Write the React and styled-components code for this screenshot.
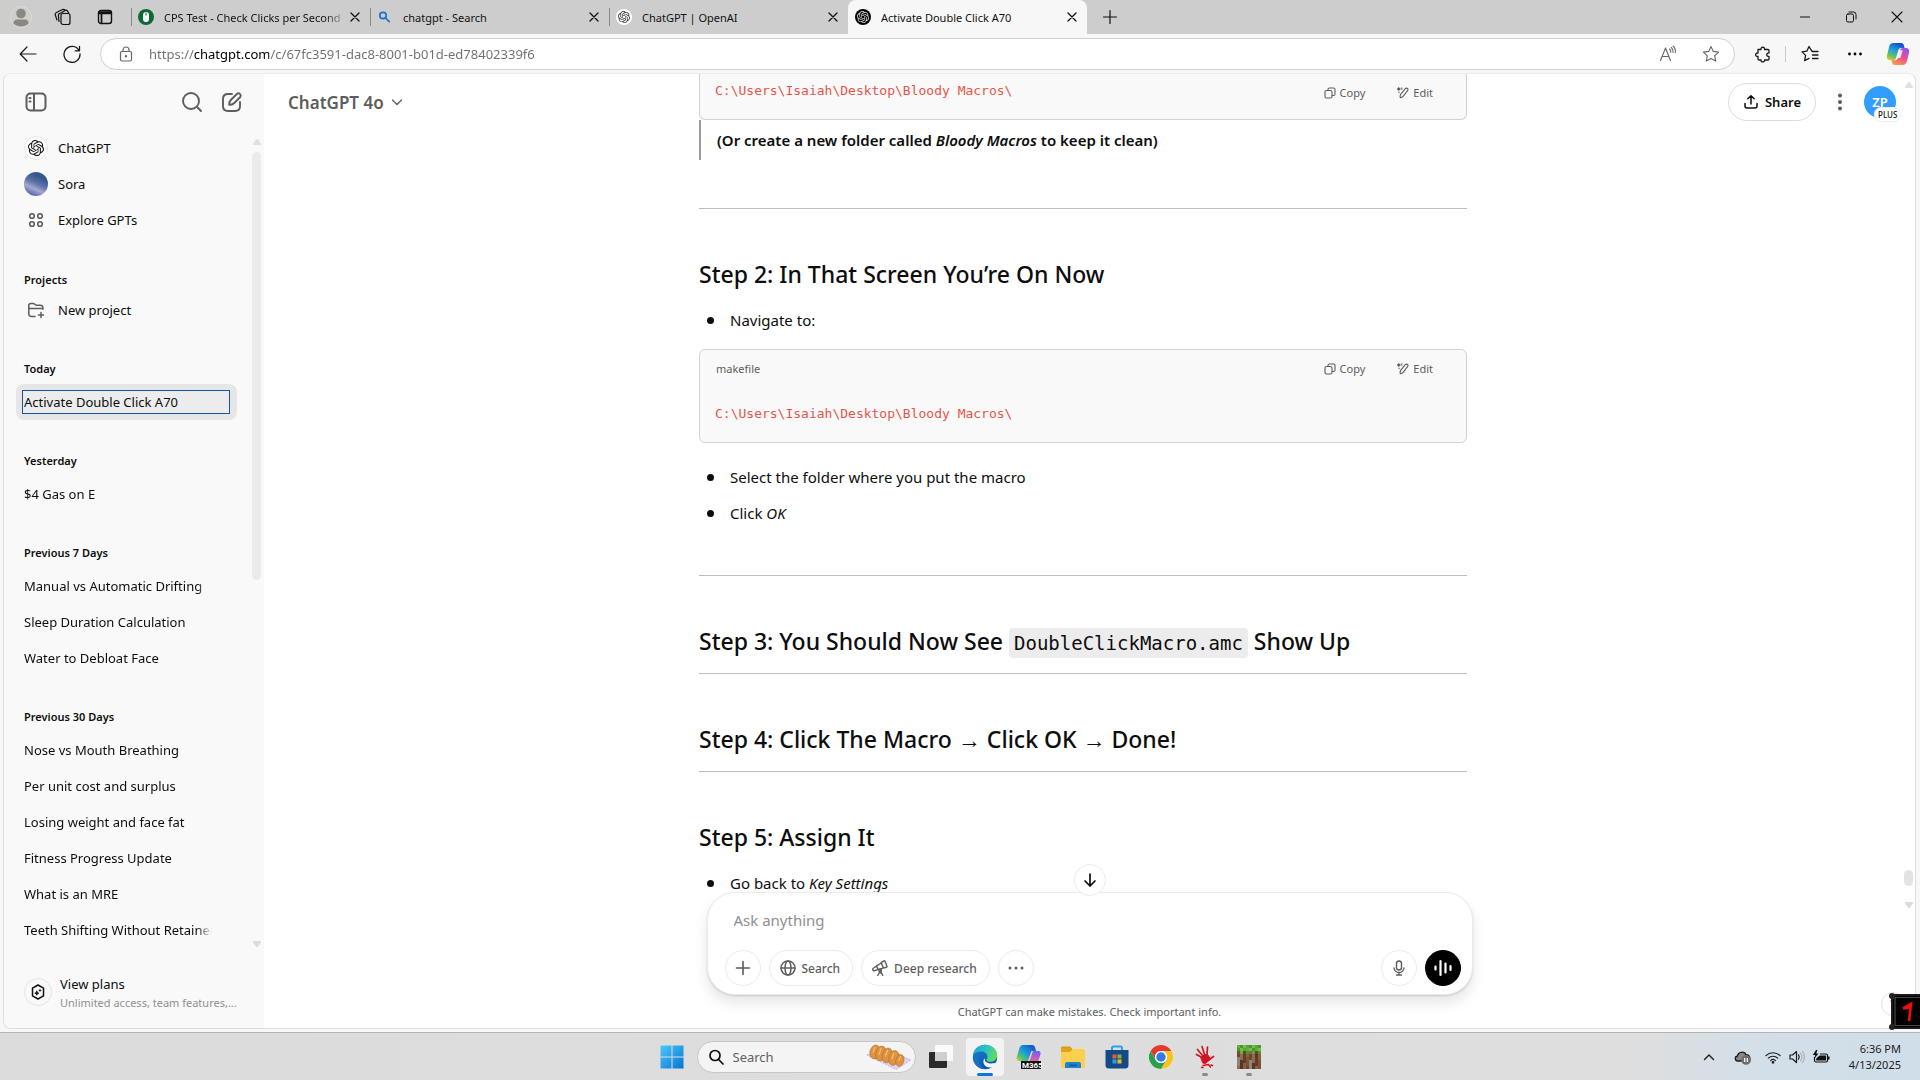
import React from "react";
import styled, { createGlobalStyle, css } from "styled-components";
import { SiOpenai } from "react-icons/si";

const sans = '"Noto Sans", "Open Sans", sans-serif';
const mono = '"DejaVu Sans Mono", "Liberation Mono", monospace';

const Global = createGlobalStyle`
  *, *::before, *::after { box-sizing: border-box; }
  html, body { margin: 0; height: 100%; overflow: hidden; }
  body { font-family: ${sans}; font-size: 13px; color: #0d0d0d; background: #f7f7f7; }
  button, input, textarea { font: inherit; color: inherit; margin: 0; padding: 0; border: 0; background: none; outline: 0; }
  button { display: inline-flex; align-items: center; justify-content: center; cursor: pointer; white-space: nowrap; }
  a { color: inherit; text-decoration: none; }
  ul, p, h1, h2, h3, pre, blockquote { margin: 0; padding: 0; font: inherit; }
  svg { display: block; flex: none; }
`;

const Screen = styled.div`
  height: 100vh;
  display: flex;
  flex-direction: column;
`;

/* ---------- icons ---------- */

const Line = styled.svg.attrs({ fill: "none", stroke: "currentColor", strokeLinecap: "round", strokeLinejoin: "round" })`
  width: ${(p) => p.$s || 16}px;
  height: ${(p) => p.$s || 16}px;
  stroke-width: ${(p) => p.$w || 1.2};
`;

const CloseIcon = () => (
  <Line viewBox="0 0 16 16" $w={1.3}><path d="M4 4l8 8M12 4l-8 8" /></Line>
);
const CopyIcon = () => (
  <Line viewBox="0 0 12 12" $s={12} $w={1.1}>
    <rect x="1" y="3.5" width="7" height="7.5" rx="1.5" />
    <path d="M4 3.2V2.4C4 1.6 4.6 1 5.4 1h4.2c.8 0 1.4.6 1.4 1.4v4.7c0 .8-.6 1.4-1.4 1.4H8.2" />
  </Line>
);
const EditIcon = () => (
  <Line viewBox="0 0 12 12" $s={12} $w={1.1}>
    <path d="M4 6.800L8.300 1.700c.6-.7 1.600-.8 2.200-.2s.6 1.500 0 2.200L6.500 8.800c-.8 1-1.900 1.800-3.200 2-.3-1.300-.2-2.900.7-4z" />
    <path d="M1.800.6l.4 1 1 .4-1 .4-.4 1-.4-1-1-.4 1-.4zM4.800.8v1.400M2 5v.6" fill="currentColor" />
  </Line>
);
const Triangle = ({ down }) => (
  <svg width="10" height="8" viewBox="0 0 10 8" fill={down ? "#dcdcdc" : "#e0e0e0"}>
    <path d={down ? "M1.5 1h7q1 .2.5 1.2L6 6.500q-1 1-2 0L1 2.200Q.5 1.200 1.500 1z" : "M1.5 7h7q1-.2.5-1.2L6 1.500q-1-1-2 0L1 5.800q-.5 1 .5 1.200z"} />
  </svg>
);

/* ---------- browser frame ---------- */

const TabStrip = styled.header`
  display: flex;
  height: 34px;
  background: #cdcdcd;
  color: #111;
`;
const FrameButtons = styled.div`
  display: flex;
  align-items: center;
  width: 131px;
`;
const FrameButton = styled.button`
  width: 42px;
  height: 34px;
`;
const Tab = styled.div`
  display: flex;
  align-items: center;
  width: 239px;
  height: 34px;
  padding: 0 7px;
  font-size: 11px;
  background: ${(p) => (p.$active ? "#f7f7f7" : "transparent")};
  border-radius: ${(p) => (p.$active ? "8px 8px 0 0" : "0")};
  ${(p) => p.$divided && css`
    background: linear-gradient(#8a8a8a, #8a8a8a) 0 8px / 1px 18px no-repeat;
  `}
`;
const TabLabel = styled.button`
  flex: 1;
  min-width: 0;
  gap: 10px;
  height: 34px;
  justify-content: flex-start;
  span {
    flex: 1;
    text-align: left;
    overflow: hidden;
    ${(p) => p.$fade && css`
      mask-image: linear-gradient(90deg, #000 88%, transparent);
    `}
  }
`;
const Favicon = styled.i`
  display: grid;
  place-items: center;
  width: 16px;
  height: 16px;
  border-radius: 50%;
  background: ${(p) => p.$bg || "transparent"};
  color: ${(p) => p.$fg || "#222"};
`;
const NewTab = styled.button`
  width: 46px;
`;
const WindowButtons = styled.div`
  display: flex;
  margin-left: auto;
  button { width: 46px; }
`;
const Toolbar = styled.div`
  display: flex;
  align-items: center;
  height: 39px;
  padding: 0 0 0 6px;
  background: #f7f7f7;
  color: #1a1a1a;
`;
const ToolButton = styled.button`
  width: ${(p) => p.$w || 44}px;
  height: 32px;
`;
const Address = styled.form`
  flex: 1;
  display: flex;
  align-items: center;
  height: 32px;
  margin: 0 6px;
  padding-left: 17px;
  background: #fff;
  border: 1px solid #d0d0d0;
  border-radius: 16px;
  color: #666;
`;
const Url = styled.input`
  flex: 1;
  height: 28px;
  margin-left: 15px;
  color: #6e6e6e;
  background: linear-gradient(90deg, #6e6e6e 45px, #000 45px, #000 120px, #6e6e6e 120px);
  background-clip: text;
  -webkit-text-fill-color: transparent;
`;
const Divider = styled.i`
  width: 1px;
  height: 16px;
  background: #c9c9c9;
`;

const tabs = [
  { title: "CPS Test - Check Clicks per Second", icon: "mouse", fade: true },
  { title: "chatgpt - Search", icon: "search" },
  { title: "ChatGPT | OpenAI", icon: "light" },
  { title: "Activate Double Click A70", icon: "dark" },
];

function TabIcon({ kind }) {
  if (kind === "mouse")
    return (
      <Favicon $bg="#0a6b35">
        <svg width="16" height="16" viewBox="0 0 16 16"><rect x="5" y="3" width="6" height="10" rx="3" fill="#fff" /><path d="M8 3.5v3" stroke="#0a6b35" /></svg>
      </Favicon>
    );
  if (kind === "search")
    return (
      <Favicon $fg="#1a73c9">
        <Line viewBox="0 0 16 16" $w={1.7}><circle cx="6" cy="6.5" r="3.2" /><path d="M8.500 9l3.700 3.700" /></Line>
      </Favicon>
    );
  return (
    <Favicon $bg={kind === "dark" ? "#000" : "#fff"} $fg={kind === "dark" ? "#ddd" : "#333"}>
      <SiOpenai size={12} />
    </Favicon>
  );
}

function Browser() {
  return (
    <>
      <TabStrip>
        <FrameButtons>
          <FrameButton aria-label="Profile">
            <svg width="22" height="22" viewBox="0 0 22 22"><circle cx="11" cy="11" r="10.5" fill="#d0cec9" stroke="#dedbd5" /><circle cx="11" cy="7.500" r="4.800" fill="#8b8782" /><path d="M3.500 17.500c0-4.500 3-4 7.500-4s7.500-.5 7.500 4c-4 4-11 4-15 0z" fill="#8b8782" /></svg>
          </FrameButton>
          <FrameButton aria-label="Workspaces">
            <Line viewBox="0 0 18 18" $s={18} $w={1.2}>
              <rect x="7" y="5.500" width="9" height="11" rx="2" />
              <path d="M5 13.500l-.6-6c-.1-1.200.6-2 1.700-2.200M7 5l4-2.500c1-.6 2-.3 2.600.7l1 1.800M3 12L1.300 7c-.4-1.200.1-2 1.200-2.500L8.500 1.500c1-.4 1.800-.2 2.300.6" />
            </Line>
          </FrameButton>
          <FrameButton aria-label="Tab actions">
            <Line viewBox="0 0 16 16" $w={1.4}><rect x="1.500" y="1.500" width="13" height="13" rx="2.500" /><path d="M2 3h12M2 4.500h12M4.500 5v9" strokeWidth="1.700" /></Line>
          </FrameButton>
        </FrameButtons>
        {tabs.map((t, i) => (
          <Tab key={t.title} $active={i === 3} $divided={i < 3}>
            <TabLabel $fade={t.fade}><TabIcon kind={t.icon} /><span>{t.title}</span></TabLabel>
            <button aria-label={`Close ${t.title}`}><CloseIcon /></button>
          </Tab>
        ))}
        <NewTab aria-label="New tab"><Line viewBox="0 0 16 16"><path d="M8 1.500v13M1.500 8h13" /></Line></NewTab>
        <WindowButtons>
          <button aria-label="Minimize"><Line viewBox="0 0 12 12" $s={12}><path d="M1.500 6h9" /></Line></button>
          <button aria-label="Restore"><Line viewBox="0 0 12 12" $s={12} $w={1}><rect x="1.500" y="3" width="7" height="8" rx="1.500" /><path d="M4 1h4.500Q11 1 11 3.500V8" /></Line></button>
          <button aria-label="Close"><Line viewBox="0 0 12 12" $s={12} $w={1.1}><path d="M1 1l10 10M11 1L1 11" /></Line></button>
        </WindowButtons>
      </TabStrip>
      <Toolbar>
        <ToolButton aria-label="Back"><Line viewBox="0 0 18 18" $s={18}><path d="M17 9H1.500M8 2L1.200 9 8 16" /></Line></ToolButton>
        <ToolButton aria-label="Refresh"><Line viewBox="0 0 18 18" $s={18} $w={1.3}><path d="M16 5.500A8 8 0 1 0 17 9M16.500 1.500v4.300h-4.300" /></Line></ToolButton>
        <Address onSubmit={(e) => e.preventDefault()}>
          <Line viewBox="0 0 16 16"><rect x="2.500" y="5.500" width="11" height="9.500" rx="1.500" /><path d="M5 5.500V4a3 3 0 0 1 6 0v1.500" /><circle cx="8" cy="10.200" r=".6" fill="currentColor" /></Line>
          <Url aria-label="Address" defaultValue="https://chatgpt.com/c/67fc3591-dac8-8001-b01d-ed78402339f6" />
          <ToolButton type="button" $w={40} aria-label="Read aloud">
            <Line viewBox="0 0 18 18" $s={18} $w={1.1}><path d="M1.500 15.500L6.500 3l5 12.500M3.300 11.500h6.500M10.500 4c1 .8 1.400 2 1.300 3.300M12.300 2.500c1.400 1.300 2 3 1.800 5M14 1c2 1.800 2.700 4 2.300 6.500" /></Line>
          </ToolButton>
          <ToolButton type="button" $w={46} aria-label="Favorite">
            <Line viewBox="0 0 18 18" $s={18} $w={1.1}><path d="M9 1.500l2.300 4.900 5.300.7-3.900 3.700 1 5.300L9 13.500l-4.700 2.600 1-5.300L1.400 7.100l5.300-.7z" /></Line>
          </ToolButton>
        </Address>
        <ToolButton aria-label="Extensions">
          <Line viewBox="0 0 18 18" $s={18} $w={1.3}><path d="M4 4.500h3c-.6-3 4-3 3.600 0H14c.6 0 1 .4 1 1V8c-3-.4-3 3.800 0 3.500V14c0 .6-.4 1-1 1h-3.400c.3 2.500-4 2.500-3.600 0H5c-.6 0-1-.4-1-1v-2.500C.8 11.800.8 7.700 4 8z" /></Line>
        </ToolButton>
        <Divider />
        <ToolButton $w={48} aria-label="Favorites list">
          <Line viewBox="0 0 18 18" $s={18} $w={1.3}><path d="M11 6.300L8 1.500 5.800 6.200l-4.800.7 3.600 3.500-1 5.300L8 13.400M11.500 6.500H17M11.500 10H17M11.500 13.500H17" /></Line>
        </ToolButton>
        <ToolButton $w={42} aria-label="Settings and more">
          <svg width="16" height="16" viewBox="0 0 16 16"><circle cx="2.500" cy="8" r="1.400" /><circle cx="8" cy="8" r="1.400" /><circle cx="13.500" cy="8" r="1.400" /></svg>
        </ToolButton>
        <ToolButton aria-label="Copilot"><CopilotIcon id="bar" size={24} /></ToolButton>
      </Toolbar>
    </>
  );
}

function CopilotIcon({ id, size }) {
  return (
    <svg width={size} height={size} viewBox="0 0 24 24">
      <defs>
        <linearGradient id={`${id}a`} x1="0.6" y1="0" x2="0.2" y2="1"><stop offset="0" stopColor="#1550c8" /><stop offset=".4" stopColor="#1e9be0" /><stop offset=".75" stopColor="#5cc46a" /><stop offset="1" stopColor="#f2c51b" /></linearGradient>
        <linearGradient id={`${id}b`} x1="0.7" y1="0" x2="0.3" y2="1"><stop offset="0" stopColor="#9455e8" /><stop offset=".5" stopColor="#e8509a" /><stop offset="1" stopColor="#fb9a4b" /></linearGradient>
      </defs>
      <path d="M7.500 1h7.500c2 0 2.600 1.200 3.100 3l.5 2h-3.300c-1.700 0-2.600.8-3.100 2.600l-2 7c-.5 1.900-1.400 2.700-3 2.700H4.500C1.500 18.300.3 16.500 1 13.500l2-8.300C3.700 2.400 5 1 7.500 1z" fill={`url(#${id}a)`} />
      <path d="M16.500 23H9c-2 0-2.600-1.200-3-2.800l-.4-1.900h3.100c1.700 0 2.600-.8 3.100-2.600l2-7c.5-1.900 1.400-2.700 3-2.700h2.700c3 0 4.200 2 3.500 4.800l-2 8.300c-.7 2.700-2 3.900-4.500 3.900z" fill={`url(#${id}b)`} />
      <path d="M13.500 8.200h3.200l-2.400 7.900h-3.600z" fill="#fff" opacity=".85" />
    </svg>
  );
}

/* ---------- page ---------- */

const Page = styled.div`
  position: relative;
  flex: 1;
  min-height: 0;
  display: flex;
  margin: 0 4px 3px 3px;
  border: 1px solid #dedede;
  border-top-color: #ececec;
  border-radius: 8px;
  background: #fff;
  overflow: hidden;
`;
const Sidebar = styled.aside`
  flex: none;
  display: flex;
  flex-direction: column;
  width: 260px;
  background: #f9f9f9;
`;
const SideTop = styled.div`
  display: flex;
  align-items: center;
  height: 56px;
  padding: 0 12px;
  color: #5d5d5d;
  button { width: 40px; height: 40px; }
  button:first-child { margin-right: auto; }
`;
const SideBody = styled.div`
  flex: 1;
  min-height: 0;
  display: flex;
`;
const SideNav = styled.nav`
  flex: 1;
  min-width: 0;
  overflow: hidden;
  padding: 0 15px 0 12px;
`;
const NavLink = styled.a`
  display: flex;
  align-items: center;
  gap: 10px;
  height: 36px;
  padding: 0 8px;
  border-radius: 8px;
  white-space: nowrap;
  overflow: hidden;
`;
const NavIcon = styled.span`
  display: grid;
  place-items: center;
  width: 24px;
  height: 24px;
  border-radius: 50%;
  color: ${(p) => p.$fg || "#5d5d5d"};
  border: ${(p) => (p.$ring ? "1px solid #e5e5e5" : "0")};
  background: ${(p) => p.$bg || "transparent"};
`;
const Group = styled.h3`
  padding: ${(p) => (p.$tight ? "33px 8px 3px" : "32px 8px 6px")};
  font-size: 11px;
  line-height: 18px;
  font-weight: 600;
`;
const ChatText = styled.span`
  width: 188px;
  overflow: hidden;
  mask-image: linear-gradient(90deg, #000 92%, transparent);
`;
const RenameRow = styled.div`
  display: flex;
  align-items: center;
  height: 36px;
  padding: 0 7px 0 6px;
  border-radius: 8px;
  background: #e6e6e6;
`;
const RenameInput = styled.input`
  width: 100%;
  height: 24px;
  padding-left: 1px;
  border: 1px solid #0f57a3;
  background: #ececec;
`;
const Rail = styled.div`
  display: flex;
  flex-direction: column;
  align-items: center;
  width: ${(p) => p.$w}px;
  padding: ${(p) => p.$pad};
  gap: 6px;
`;
const Thumb = styled.i`
  width: 9px;
  height: ${(p) => p.$h}px;
  border-radius: 5px;
  background: ${(p) => p.$c || "#ebebeb"};
  margin-top: ${(p) => (p.$end ? "auto" : "0")};
  margin-bottom: ${(p) => (p.$end ? "9px" : "auto")};
`;
const Plans = styled.button`
  justify-content: flex-start;
  gap: 8px;
  height: 72px;
  padding: 0 20px;
  text-align: left;
`;
const PlanText = styled.span`
  display: flex;
  flex-direction: column;
  padding-top: 2px;
  line-height: 19px;
  small { font-size: 11px; line-height: 18px; color: #8f8f8f; }
`;
const PlanIcon = styled(NavIcon)`
  width: 28px;
  height: 28px;
`;

const history = [
  { title: "Yesterday", items: ["$4 Gas on E"] },
  { title: "Previous 7 Days", items: ["Manual vs Automatic Drifting", "Sleep Duration Calculation", "Water to Debloat Face"] },
  {
    title: "Previous 30 Days",
    items: ["Nose vs Mouth Breathing", "Per unit cost and surplus", "Losing weight and face fat", "Fitness Progress Update", "What is an MRE", "Teeth Shifting Without Retainers"],
  },
];

function Side() {
  return (
    <Sidebar>
      <SideTop>
        <button aria-label="Close sidebar"><Line viewBox="0 0 24 24" $s={24} $w={2}><rect x="2.500" y="3.500" width="19" height="17" rx="4" /><path d="M10 4v16M5.500 8h1M5.500 11.500h1" /></Line></button>
        <button aria-label="Search chats"><Line viewBox="0 0 24 24" $s={24} $w={1.9}><circle cx="11" cy="11" r="8" /><path d="M17 17l4 4" /></Line></button>
        <button aria-label="New chat"><Line viewBox="0 0 24 24" $s={24} $w={1.9}><path d="M12 4H8c-3 0-5 2-5 5v7c0 3 2 5 5 5h7c3 0 5-2 5-5v-4M9.200 14.800c0-2 .4-3.600 1.600-4.800l6.300-6.200a2.300 2.300 0 0 1 3.200 3.200L14 13.200c-1.200 1.200-2.800 1.600-4.800 1.600z" /></Line></button>
      </SideTop>
      <SideBody>
        <SideNav>
          <NavLink href="#chatgpt"><NavIcon $ring $bg="#fff" $fg="#111"><SiOpenai size={16} /></NavIcon>ChatGPT</NavLink>
          <NavLink href="#sora"><NavIcon $bg="linear-gradient(205deg, #34588c 25%, #5f74ab 48%, #a6a8d0 66%, #6f7cb8 80%, #3b4d97)" />Sora</NavLink>
          <NavLink href="#gpts">
            <NavIcon><Line viewBox="0 0 16 16" $w={1.6}><circle cx="4" cy="4" r="2.300" /><circle cx="12" cy="4" r="2.300" /><circle cx="4" cy="12" r="2.300" /><circle cx="12" cy="12" r="2.300" /></Line></NavIcon>
            Explore GPTs
          </NavLink>
          <Group $tight>Projects</Group>
          <NavLink href="#new-project">
            <NavIcon><Line viewBox="0 0 18 18" $s={18} $w={1.5}><path d="M8 15.500H4.500c-1.700 0-2.700-1-2.700-2.700V4.500c0-1.200.8-2 2-2h2.400c1.500 0 1.500 1.700 3 1.700h4c1.700 0 2.700 1 2.700 2.600v1.400M2 7.500h12.500M14 11.500v5M11.500 14h5" /></Line></NavIcon>
            New project
          </NavLink>
          <Group>Today</Group>
          <RenameRow><RenameInput aria-label="Chat name" defaultValue="Activate Double Click A70" /></RenameRow>
          {history.map((g) => (
            <React.Fragment key={g.title}>
              <Group>{g.title}</Group>
              {g.items.map((t) => <NavLink key={t} href="#chat"><ChatText>{t}</ChatText></NavLink>)}
            </React.Fragment>
          ))}
        </SideNav>
        <Rail $w={12} $pad="8px 3px 8px 0"><Triangle /><Thumb $h={428} /><Triangle down /></Rail>
      </SideBody>
      <Plans>
        <PlanIcon $ring $fg="#111">
          <Line viewBox="0 0 16 16" $w={1.5}><path d="M8 1l5.500 3.200v7.600L8 15l-5.500-3.200V4.200z" /><path d="M6.800 7.200l.6 1.400 1.400.6-1.400.6-.6 1.400-.6-1.400-1.400-.6 1.400-.6zM10 5.500v1.800M9.100 6.400h1.800" strokeWidth=".9" fill="currentColor" /></Line>
        </PlanIcon>
        <PlanText>View plans<small>Unlimited access, team features,...</small></PlanText>
      </Plans>
    </Sidebar>
  );
}

const Main = styled.main`
  flex: 1;
  min-width: 0;
  display: grid;
  grid-template-rows: minmax(0, 1fr) auto;
  grid-template-columns: minmax(0, 1fr);
`;
const TopBar = styled.div`
  grid-area: 1 / 1;
  align-self: start;
  z-index: 1;
  display: flex;
  align-items: center;
  justify-content: space-between;
  height: 56px;
  padding: 0 19px 0 24px;
`;
const Model = styled.button`
  gap: 6px;
  font-size: 17px;
  font-weight: 600;
  color: #5d5d5d;
`;
const TopActions = styled.div`
  display: flex;
  align-items: center;
  gap: 10px;
`;
const Share = styled.button`
  gap: 6px;
  width: 88px;
  height: 38px;
  border: 1px solid #dcdcdc;
  border-radius: 19px;
  background: #fff;
  font-weight: 600;
`;
const KebabButton = styled.button`
  width: 28px;
  height: 36px;
`;
const Avatar = styled.button`
  position: relative;
  width: 32px;
  height: 32px;
  border-radius: 50%;
  background: #339cff;
  color: #fff;
  font-weight: 600;
`;
const Badge = styled.span`
  position: absolute;
  left: 10px;
  bottom: -4px;
  padding: 0 3px;
  border: 1px solid #eee;
  border-radius: 7px;
  background: #fff;
  color: #111;
  font-size: 8px;
  line-height: 13px;
  font-weight: 500;
`;
const Scroller = styled.div`
  grid-area: 1 / 1;
  display: flex;
  overflow: hidden;
`;
const Column = styled.div`
  flex: 1;
  min-width: 0;
`;
const Article = styled.article`
  max-width: 768px;
  margin: 0 auto;
  font-size: 15px;
  line-height: 28px;
`;
const CodeCard = styled.section`
  display: grid;
  grid-template-columns: 1fr auto;
  margin: ${(p) => (p.$cut ? "0" : "15px 0 20px")};
  border: 1px solid #d3d3d3;
  border-top-width: ${(p) => (p.$cut ? 0 : 1)}px;
  border-radius: ${(p) => (p.$cut ? "0 0 6px 6px" : "6px")};
  background: #f9f9f9;
  font-size: 11px;
  line-height: 38px;
  color: #5d5d5d;
  pre {
    grid-column: 1;
    padding: ${(p) => (p.$cut ? "5px 15px 16px" : "14px 15px 16px")};
    font: 13px/24px ${mono};
    color: #e45649;
  }
`;
const Lang = styled.span`
  padding-left: 16px;
`;
const CodeActions = styled.div`
  grid-column: 2;
  display: flex;
  align-items: flex-start;
  gap: 32px;
  padding-right: 33px;
  button { gap: 4px; height: 38px; }
`;
const Quote = styled.blockquote`
  padding: 8px 16px;
  border-left: 2px solid #9b9b9b;
  line-height: 24px;
  font-weight: 600;
`;
const Rule = styled.hr`
  height: 1px;
  margin: 0 0 49px;
  border: 0;
  background: #bdbdbd;
  ${Quote} + &, ul + & { margin-top: 48px; }
`;
const Heading = styled.h3`
  margin-bottom: 16px;
  font-size: 23px;
  line-height: 32px;
  font-weight: 500;
  code {
    padding: 4px 5px;
    border-radius: 4px;
    background: #ececec;
    font: 500 19px/20px ${mono};
  }
`;
const List = styled.ul`
  display: flex;
  flex-direction: column;
  gap: 8px;
  padding-left: 8px;
  list-style: none;
  li::before {
    content: "";
    display: inline-block;
    width: 7px;
    height: 7px;
    margin-right: 16px;
    border-radius: 50%;
    background: #0d0d0d;
    vertical-align: 2px;
  }
`;

const Dock = styled.div`
  grid-area: 2 / 1;
  position: relative;
  display: flex;
  flex-direction: column;
  align-items: center;
  margin-top: -19px;
`;
const ToBottom = styled.button`
  position: absolute;
  top: -28px;
  width: 32px;
  height: 32px;
  border: 1px solid #ececec;
  border-radius: 50%;
  background: #fff;
`;
const Composer = styled.form`
  width: 100%;
  max-width: 766px;
  padding: 15px 11px 8px 17px;
  border: 1px solid #ececec;
  border-radius: 28px;
  background: #fff;
  box-shadow: 0 8px 14px rgba(0, 0, 0, 0.1), 0 1px 2px rgba(0, 0, 0, 0.14);
`;
const Prompt = styled.input`
  display: block;
  width: 100%;
  height: 24px;
  margin-bottom: 18px;
  padding: 0 9px;
  font-size: 15px;
  &::placeholder { color: #8f8f8f; opacity: 1; }
`;
const Tools = styled.div`
  display: flex;
  align-items: center;
  gap: 8px;
`;
const Tool = styled.button`
  gap: 5px;
  height: 36px;
  min-width: 36px;
  padding: ${(p) => (p.$text ? "0 12px 0 9px" : "0")};
  border: 1px solid ${(p) => (p.$solid ? "#000" : "#ebebeb")};
  border-radius: 18px;
  background: ${(p) => (p.$solid ? "#000" : "#fff")};
  color: ${(p) => (p.$solid ? "#fff" : "#5d5d5d")};
  font-size: 12px;
  font-weight: 500;
  margin-left: ${(p) => (p.$push ? "auto" : "0")};
`;
const Notice = styled.p`
  font-size: 11px;
  line-height: 33px;
  color: #5d5d5d;
`;
const HelpButton = styled.button`
  position: absolute;
  right: 10px;
  bottom: 12px;
  width: 24px;
  height: 24px;
  border: 1px solid #e2e2e2;
  border-radius: 50%;
  background: #fff;
`;
const OverlayBadge = styled.div`
  position: fixed;
  right: 0;
  bottom: 50px;
  z-index: 5;
`;

function CodeBlock({ cut, lang }) {
  return (
    <CodeCard $cut={cut}>
      {lang && <Lang>{lang}</Lang>}
      {cut && <pre><code>C:\Users\Isaiah\Desktop\Bloody Macros\</code></pre>}
      <CodeActions>
        <button><CopyIcon />Copy</button>
        <button><EditIcon />Edit</button>
      </CodeActions>
      {!cut && <pre><code>C:\Users\Isaiah\Desktop\Bloody Macros\</code></pre>}
    </CodeCard>
  );
}

function Chat() {
  return (
    <Main>
      <TopBar>
        <Model>ChatGPT 4o<Line viewBox="0 0 14 14" $s={14} $w={1.3}><path d="M2.500 5L7 9.500 11.500 5" /></Line></Model>
        <TopActions>
          <Share><Line viewBox="0 0 16 16" $w={1.5}><path d="M8 10V2M4.800 4.800L8 1.700l3.200 3.100M2 9.500V12c0 1.200.8 2 2 2h8c1.200 0 2-.8 2-2V9.500" /></Line>Share</Share>
          <KebabButton aria-label="More options"><svg width="6" height="18" viewBox="0 0 6 18" fill="#5d5d5d"><circle cx="3" cy="2.500" r="2" /><circle cx="3" cy="9" r="2" /><circle cx="3" cy="15.500" r="2" /></svg></KebabButton>
          <Avatar aria-label="Account">ZP<Badge>PLUS</Badge></Avatar>
        </TopActions>
      </TopBar>
      <Scroller>
        <Column>
          <Article>
            <CodeBlock cut />
            <Quote>(Or create a new folder called <em>Bloody Macros</em> to keep it clean)</Quote>
            <Rule />
            <Heading>Step 2: In That Screen You’re On Now</Heading>
            <List><li>Navigate to:</li></List>
            <CodeBlock lang="makefile" />
            <List><li>Select the folder where you put the macro</li><li>Click <em>OK</em></li></List>
            <Rule />
            <Heading>Step 3: You Should Now See <code>DoubleClickMacro.amc</code> Show Up</Heading>
            <Rule />
            <Heading>Step 4: Click The Macro → Click OK → Done!</Heading>
            <Rule />
            <Heading>Step 5: Assign It</Heading>
            <List><li>Go back to <em>Key Settings</em></li></List>
          </Article>
        </Column>
        <Rail $w={13} $pad="7px 0 2px"><Triangle /><Thumb $h={16} $c="#e3e3e3" $end /><Triangle down /></Rail>
      </Scroller>
      <Dock>
        <Composer onSubmit={(e) => e.preventDefault()}>
          <Prompt aria-label="Message" placeholder="Ask anything" />
          <Tools>
            <Tool type="button" aria-label="Add"><Line viewBox="0 0 18 18" $s={18} $w={1.6}><path d="M9 2.500v13M2.500 9h13" /></Line></Tool>
            <Tool type="button" $text><Line viewBox="0 0 18 18" $s={18} $w={1.5}><circle cx="9" cy="9" r="7" /><ellipse cx="9" cy="9" rx="3" ry="7" /><path d="M2 9h14" /></Line>Search</Tool>
            <Tool type="button" $text>
              <Line viewBox="0 0 18 18" $s={18} $w={1.4}><path d="M10.200 3.600l2.600-1.700c.5-.3 1-.1 1.200.4l1.900 4.800c.2.600-.1 1-.6 1.200l-3 .8zM10.300 4L5.500 6.800l1.500 3.700 5.200-1.400M5.700 7.200L2.500 9c-.8.500-1 1.200-.7 1.900s1 1 1.800.8L7 10.500M9 12.200L6.800 16.500M9.400 12.200l2.400 4.300M9.200 14v-2.500" /><circle cx="9.200" cy="11.500" r="1.200" /></Line>
              Deep research
            </Tool>
            <Tool type="button" aria-label="More tools"><svg width="18" height="18" viewBox="0 0 18 18" fill="#5d5d5d"><circle cx="3" cy="9" r="1.500" /><circle cx="9" cy="9" r="1.500" /><circle cx="15" cy="9" r="1.500" /></svg></Tool>
            <Tool type="button" $push aria-label="Dictate"><Line viewBox="0 0 18 18" $s={18} $w={1.4}><rect x="6.500" y="2" width="5" height="9" rx="2.500" /><path d="M4 9c.5 3 2.500 4.500 5 4.500S13.500 12 14 9M9 13.500V16M6.500 16h5" /></Line></Tool>
            <Tool type="button" $solid aria-label="Voice mode"><Line viewBox="0 0 20 20" $s={20} $w={2.2}><path d="M2.500 8.500v3M7.500 3v14M12.500 5.500v9M17.500 8v4" /></Line></Tool>
          </Tools>
        </Composer>
        <ToBottom aria-label="Scroll to bottom"><Line viewBox="0 0 16 16" $w={1.7}><path d="M8 2v12M3 9l5 5 5-5" /></Line></ToBottom>
        <Notice>ChatGPT can make mistakes. Check important info.</Notice>
      </Dock>
    </Main>
  );
}

/* ---------- taskbar ---------- */

const Taskbar = styled.footer`
  display: grid;
  grid-template-columns: 1fr auto 1fr;
  align-items: center;
  height: 48px;
  border-top: 1px solid #b4b4b6;
  background: linear-gradient(90deg, #dcdcdd 0%, #dededf 85%, #d3dfe8 92%, #cfdee9 100%);
`;
const Apps = styled.div`
  grid-column: 2;
  display: flex;
  align-items: center;
`;
const AppButton = styled.button`
  position: relative;
  width: 38px;
  height: 38px;
  margin: 0 3px;
  border-radius: 4px;
  background: ${(p) => (p.$active ? "#f3f3f4" : "transparent")};
  &::after {
    content: "";
    position: absolute;
    bottom: 0;
    width: ${(p) => (p.$active ? 16 : 6)}px;
    height: 3px;
    border-radius: 2px;
    background: ${(p) => (p.$active ? "#0a78d4" : p.$open ? "#8b8b8d" : "transparent")};
  }
`;
const SearchBox = styled.label`
  display: flex;
  align-items: center;
  gap: 9px;
  width: 219px;
  height: 32px;
  margin: 0 3px;
  padding: 0 4px 0 10px;
  border: 1px solid #c6c6c8;
  border-radius: 16px;
  background: #f4f4f5;
  input { flex: 1; min-width: 0; }
  input::placeholder { color: #5f5f5f; opacity: 1; }
`;
const Tray = styled.div`
  grid-column: 3;
  display: flex;
  align-items: center;
  justify-content: flex-end;
  padding-right: 19px;
  color: #1b1b1b;
`;
const TrayButton = styled.button`
  width: ${(p) => p.$w}px;
  height: 38px;
`;
const Clock = styled.button`
  flex-direction: column;
  align-items: flex-end;
  width: 66px;
  font-size: 11px;
  line-height: 16px;
`;

const grass = [
  "#5fb03c", "#4d962f", "#6cc046", "#57a636", "#4d962f", "#6cc046", "#57a636", "#4d962f",
  "#4d962f", "#6cc046", "#57a636", "#5fb03c", "#6cc046", "#4d962f", "#5fb03c", "#6cc046",
  "#7a4f33", "#5fb03c", "#6b4329", "#4d962f", "#8f6344", "#57a636", "#6b4329", "#4d962f",
];
const dirt = ["#7a5339", "#5f3d28", "#946a4b", "#6b472f", "#87603f", "#553725", "#8b8580"];

function Desktop() {
  return (
    <Taskbar>
      <Apps>
        <AppButton aria-label="Start">
          <svg width="24" height="24" viewBox="0 0 24 24">
            <defs><linearGradient id="win" x1="0" y1="0" x2="1" y2="1"><stop offset="0" stopColor="#4cc8fb" /><stop offset="1" stopColor="#0673d0" /></linearGradient></defs>
            <path d="M.5.5h11v11H.5zM12.500.5h11v11h-11zM.5 12.500h11v11H.5zM12.500 12.500h11v11h-11z" fill="url(#win)" />
          </svg>
        </AppButton>
        <SearchBox>
          <Line viewBox="0 0 16 16" $w={1.7}><circle cx="7" cy="6.500" r="5" /><path d="M10.600 10.500L15 15" /></Line>
          <input aria-label="Search" placeholder="Search" />
          <svg width="44" height="26" viewBox="0 0 44 26">
            <path d="M0 11l18-6 26 11-15 9.500z" fill="#ded6ee" stroke="#b6a8d8" strokeWidth=".8" strokeDasharray="2 1" />
            <g fill="#dc9440" stroke="#b56d24" strokeWidth=".6">
              <ellipse cx="8" cy="8" rx="5" ry="7" transform="rotate(15 8 8)" /><ellipse cx="14" cy="9.500" rx="5" ry="7.500" transform="rotate(15 14 9)" /><ellipse cx="20.500" cy="11.500" rx="5" ry="7.500" transform="rotate(15 20.500 11)" /><ellipse cx="27" cy="14" rx="5" ry="7.500" transform="rotate(15 27 13.500)" /><ellipse cx="33" cy="16.500" rx="4" ry="6" transform="rotate(15 33 16)" />
            </g>
            <path d="M8 3.500l-2 5M14 4.500l-2 6M20.500 6.500L18.500 12M27 9l-2 5.500M33.500 12.500l-1.500 4" stroke="#efbb70" strokeWidth="1.300" strokeLinecap="round" />
          </svg>
        </SearchBox>
        <AppButton aria-label="Task view">
          <svg width="26" height="26" viewBox="0 0 26 26"><rect x="1" y="8" width="18" height="16" rx="1" fill="#2a2a2a" /><rect x="7" y="1" width="18" height="16" rx="1" fill="#fafafa" /><rect x="7" y="8" width="12" height="9" fill="#cfcfcf" /></svg>
        </AppButton>
        <AppButton $active aria-label="Microsoft Edge">
          <svg width="26" height="26" viewBox="0 0 26 26">
            <defs>
              <linearGradient id="eg" x1="0" y1="0" x2="1" y2=".3"><stop offset="0" stopColor="#1d9fe0" /><stop offset=".6" stopColor="#2fc3c0" /><stop offset="1" stopColor="#5fdb62" /></linearGradient>
              <linearGradient id="eb" x1="0" y1="0" x2=".6" y2="1"><stop offset="0" stopColor="#1886d2" /><stop offset="1" stopColor="#0c50a4" /></linearGradient>
            </defs>
            <circle cx="13" cy="13" r="12.200" fill="url(#eb)" />
            <path d="M1 11.500C2 5 7 .8 13 .8c7 0 12.200 4.800 12.200 10.400 0 4-3 6.500-6.400 6.500-3 0-4.500-1-4.500-1.800 0-.7 1.100-1.200 1.100-3C15.400 10 13 7.600 9 7.600c-3.500 0-6.300 1.500-8 3.900z" fill="url(#eg)" />
            <path d="M24 18.500c-2 1-7.500 1.800-10.300-.8-1.400-1.400-1-2.700-.4-3.600-2.600 1.400-2.800 6.300 1.200 8.600 2.600 1.400 5.400.7 7-.2 1.100-1 2-2.400 2.500-4z" fill="#f3f3f4" />
            <path d="M9.500 8c-4 2.500-5.500 13 4.200 17-6 .2-12-4-12.600-11C2 10 6 7.600 9.500 8z" fill="#1673c4" />
          </svg>
        </AppButton>
        <AppButton aria-label="Microsoft 365 Copilot">
          <svg width="26" height="26" viewBox="0 0 26 26">
            <defs>
              <linearGradient id="ma" x1="1" y1="0" x2="0" y2="1"><stop offset="0" stopColor="#1148b8" /><stop offset=".5" stopColor="#169adf" /><stop offset=".8" stopColor="#5cc46a" /><stop offset="1" stopColor="#f0d040" /></linearGradient>
              <linearGradient id="mb" x1=".5" y1="0" x2=".3" y2="1"><stop offset="0" stopColor="#7a5cf0" /><stop offset="1" stopColor="#f0609c" /></linearGradient>
            </defs>
            <path d="M7 1h9c2 0 3 1.500 3.500 4l.5 2h-4.500L12 17H3c-2.500 0-3-2-2-5l2.500-8C4.300 2 5.300 1 7 1z" fill="url(#ma)" />
            <path d="M17 7h5c2.500 0 3 2 2.300 4L22 18h-9z" fill="url(#mb)" />
            <rect x="5" y="17" width="20" height="8" fill="#111" />
            <text x="6" y="24" fontFamily="Roboto, sans-serif" fontWeight="700" fontSize="8" fill="#fff">M365</text>
          </svg>
        </AppButton>
        <AppButton aria-label="File Explorer">
          <svg width="24" height="24" viewBox="0 0 24 24"><path d="M0 3q0-1.500 1.500-1.500H9L11.500 4v4H0z" fill="#d89b12" /><rect y="4" width="24" height="19" rx="1.500" fill="#fcd04f" /><path d="M0 7V3h11v2L9 7z" fill="#e0a21a" /><path d="M4 23v-4q0-2 2-2h12q2 0 2 2v4z" fill="#1f84cf" /><rect x="8" y="19.500" width="8" height="1.800" rx=".9" fill="#0e5ea5" /></svg>
        </AppButton>
        <AppButton aria-label="Microsoft Store">
          <svg width="24" height="24" viewBox="0 0 24 24"><path d="M7 6V3q0-1.500 1.500-1.500h7Q17 1.500 17 3v3" fill="none" stroke="#2aa2e8" strokeWidth="2" /><path d="M.5 5h23v15q0 3.500-3.500 3.500H4Q.5 23.500.5 20z" fill="#164a86" /><path d="M7.500 9.500h4v4h-4z" fill="#f2592a" /><path d="M12.500 9.500h4v4h-4z" fill="#7fba2c" /><path d="M7.500 14.500h4v4h-4z" fill="#21a3ee" /><path d="M12.500 14.500h4v4h-4z" fill="#fdb913" /></svg>
        </AppButton>
        <AppButton aria-label="Google Chrome">
          <svg width="24" height="24" viewBox="0 0 24 24"><circle cx="12" cy="12" r="12" fill="#fff" /><path d="M1.600 6A12 12 0 0 1 22.400 6H12a6 6 0 0 0-5.200 9z" fill="#e23b2e" /><path d="M22.400 6A12 12 0 0 1 12 24l5.200-9A6 6 0 0 0 12 6z" fill="#fbc31a" /><path d="M12 24A12 12 0 0 1 1.600 6l5.200 9a6 6 0 0 0 10.400 0z" fill="#2b9f4b" /><circle cx="12" cy="12" r="6" fill="#fff" /><circle cx="12" cy="12" r="4.700" fill="#3479e8" /></svg>
        </AppButton>
        <AppButton $open aria-label="Bloody">
          <svg width="22" height="24" viewBox="0 0 22 24" stroke="#cf1420" strokeLinecap="round" fill="none"><path d="M8 12.500L2.500 9.500M8.500 10.500L3.500 4.500M10.500 9.500L8 1.500M13 10L13.500 2M16 14l3.500-2.500" strokeWidth="1.700" /><path d="M7 12.500q3.500-4.500 7.500-2l2 4-3.500 2.500q-1 2.500-4 1z" fill="#cf1420" strokeWidth="1" /><path d="M9 20.500l5.500-1 2 2.500M7.500 22.500h1.500M17 20l1.500.5" strokeWidth="1.500" /></svg>
        </AppButton>
        <AppButton $open aria-label="Minecraft">
          <svg width="24" height="24" viewBox="0 0 8 8" shapeRendering="crispEdges">
            {Array.from({ length: 64 }, (_, i) => (
              <rect key={i} x={i % 8} y={Math.floor(i / 8)} width="1" height="1" fill={i < 24 ? grass[i] : dirt[(i * 5 + Math.floor(i / 8) * 3 + (i % 3)) % 7]} />
            ))}
          </svg>
        </AppButton>
      </Apps>
      <Tray>
        <TrayButton $w={32} aria-label="Hidden icons"><Line viewBox="0 0 12 12" $s={12} $w={1.4}><path d="M1.500 8.500L6 4l4.500 4.500" /></Line></TrayButton>
        <TrayButton $w={34} aria-label="OneDrive">
          <svg width="17" height="16" viewBox="0 0 17 16"><path d="M4 12C.5 12 .5 7.500 3.500 7c.5-4.500 7-5 8.500-1.300 2.500 0 4 1.600 3.800 4V12z" fill="#8a8a8a" stroke="#1b1b1b" strokeWidth="1.300" /><circle cx="12" cy="11" r="4.800" fill="#6e6e6e" /><path d="M10.700 9v4M13.300 9v4" stroke="#fff" strokeWidth="1.200" /></svg>
        </TrayButton>
        <TrayButton $w={28} aria-label="Wi-Fi"><Line viewBox="0 0 18 16" $w={1.3}><path d="M1 6.500a11.500 11.500 0 0 1 16 0M3.700 9.300a7.700 7.700 0 0 1 10.600 0M6.300 12a4 4 0 0 1 5.400 0" /><circle cx="9" cy="14" r=".9" fill="currentColor" /></Line></TrayButton>
        <TrayButton $w={20} aria-label="Volume"><Line viewBox="0 0 16 16" $w={1.2}><path d="M1 6v4h2.500L7.500 13.500v-11L3.500 6zM9.500 5.800q1.500 2.200 0 4.400" /><path d="M11.500 4.200q3 3.800 0 7.600M13.500 2.500q4 5.500 0 11" stroke="#aab4ba" /></Line></TrayButton>
        <TrayButton $w={28} aria-label="Battery">
          <svg width="18" height="16" viewBox="0 0 18 16"><path d="M2.500 8v3.500q0 1.500 1.500 1.500h10Q15.500 13 15.500 11.500V6.500Q15.500 5 14 5H8" fill="none" stroke="#111" strokeWidth="1.200" /><path d="M4.200 11.500V9.500L7.500 6.500H14v5zM16 7.500h1.500v3H16zM4 1L.8 6h2.400L2.500 9.500 6.500 4.500H4.200L5.500 1z" fill="#111" /></svg>
        </TrayButton>
        <Clock><span>6:36 PM</span><span>4/13/2025</span></Clock>
      </Tray>
    </Taskbar>
  );
}

export default function App() {
  return (
    <Screen>
      <Global />
      <Browser />
      <Page>
        <Side />
        <Chat />
        <HelpButton aria-label="Help">?</HelpButton>
      </Page>
      <OverlayBadge>
        <svg width="31" height="37" viewBox="0 0 31 37">
          <path d="M3 2h30v33H3z" fill="#000" stroke="#1a1a1a" strokeWidth="2" />
          <path d="M31 4.500H6v28h25" fill="none" stroke="#4a4a4a" strokeWidth="1.200" />
          <circle cx="3" cy="3" r="3" fill="#222" /><circle cx="3" cy="34" r="3" fill="#222" />
          <path d="M14 15.500l8-4.500-2 17M14 15.500l6.500-1" fill="none" stroke="#f00d0d" strokeWidth="2.600" />
        </svg>
      </OverlayBadge>
      <Desktop />
    </Screen>
  );
}
